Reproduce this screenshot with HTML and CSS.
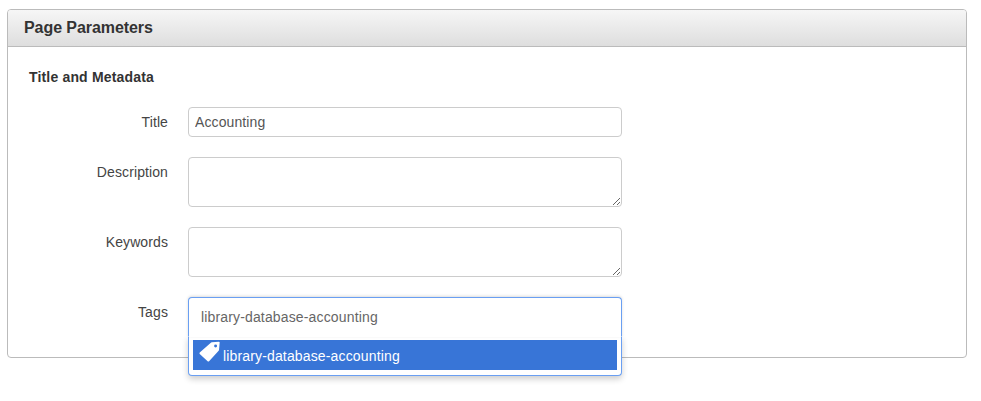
FILE: index.html
```html
<!DOCTYPE html>
<html lang="en">
<head>
<meta charset="utf-8">
<title>Page Parameters</title>
<link rel="stylesheet" href="styles.css">
</head>
<body>
<section class="panel">
  <h2 class="panel-heading">Page Parameters</h2>
  <div class="panel-body">
    <h3 class="group-title">Title and Metadata</h3>
    <form class="form">
      <div class="row">
        <label class="label">Title</label>
        <input class="control" type="text" value="Accounting">
      </div>
      <div class="row">
        <label class="label">Description</label>
        <textarea class="control area"></textarea>
      </div>
      <div class="row">
        <label class="label">Keywords</label>
        <textarea class="control area"></textarea>
      </div>
      <div class="row">
        <label class="label">Tags</label>
        <div class="combo">
          <div class="combo-input">library-database-accounting</div>
          <div class="combo-menu">
            <div class="combo-item">
              <svg class="tag-icon" viewBox="0 0 20 20" aria-hidden="true"><path fill-rule="evenodd" fill="#fff" d="M12.2 1.2 19 .6c.4 0 .7.3.7.7l-.6 7c0 .4-.2.7-.4.9L9.6 19.3c-.4.4-1 .4-1.4 0L.7 12.3c-.4-.4-.4-1 0-1.4l10.6-9.3c.2-.2.5-.4.9-.4ZM15.8 3.3a1.4 1.4 0 1 0 0 2.8 1.4 1.4 0 0 0 0-2.8Z"/></svg>
              <span>library-database-accounting</span>
            </div>
          </div>
        </div>
      </div>
    </form>
  </div>
</section>
</body>
</html>
```

FILE: styles.css
```css
* { box-sizing: border-box; }

html, body { margin: 0; background: #fff; }

body {
  width: 981px;
  height: 401px;
  padding: 9px 14px 0 7px;
  overflow: hidden;
  font-family: "Liberation Sans", Arial, sans-serif;
  font-size: 14px;
  line-height: 20px;
  color: #333;
}

.panel {
  width: 960px;
  height: 349px;
  border: 1px solid #bbb;
  border-radius: 4px;
  background: #fff;
}

.panel-heading {
  height: 37px;
  margin: 0;
  padding: 8px 16px;
  border-bottom: 1px solid #bbb;
  border-radius: 3px 3px 0 0;
  background: linear-gradient(#f6f6f6, #dedede);
  font-size: 16px;
  font-weight: bold;
  line-height: 20px;
  letter-spacing: -0.07px;
}

.panel-body { padding: 20px 0 20px 21px; }

.group-title {
  margin: 0 0 20px;
  font-size: 14px;
  font-weight: bold;
  line-height: 20px;
  letter-spacing: 0.17px;
}

.form { display: flex; flex-direction: column; gap: 20px; }

.row { display: flex; align-items: flex-start; gap: 20px; }

.label {
  width: 139px;
  padding-top: 5px;
  text-align: right;
  color: #444;
  letter-spacing: 0.1px;
}

.control {
  display: block;
  width: 434px;
  height: 30px;
  margin: 0;
  padding: 4px 6px;
  border: 1px solid #ccc;
  border-radius: 4px;
  background: #fff;
  font: 14px/20px "Liberation Sans", Arial, sans-serif;
  letter-spacing: 0.1px;
  color: #555;
  outline: none;
}

.area { height: 50px; resize: vertical; }

.combo { position: relative; width: 434px; height: 40px; }

.combo-input {
  position: relative;
  z-index: 1;
  height: 40px;
  padding: 9px 12px;
  border: 1px solid #6a9ff2;
  border-bottom-color: #fff;
  border-radius: 4px 4px 0 0;
  background: #fff;
  color: #666;
  letter-spacing: 0.15px;
  box-shadow: 0 -1px 3px rgba(0, 0, 0, 0.14);
}

.combo-menu {
  position: absolute;
  top: 39px;
  left: 0;
  width: 434px;
  height: 40px;
  padding: 4px 4px 4px;
  border: 1px solid #6a9ff2;
  border-top: 0;
  border-radius: 0 0 4px 4px;
  background: #fff;
  box-shadow: 0 3px 6px rgba(0, 0, 0, 0.2);
}

.combo-item {
  display: flex;
  align-items: center;
  gap: 3px;
  height: 30px;
  padding: 2px 0 0 6px;
  background: #3875d7;
  color: #fff;
  letter-spacing: 0.15px;
}

.tag-icon { width: 21px; height: 21px; margin-top: -9px; flex: none; }
```
